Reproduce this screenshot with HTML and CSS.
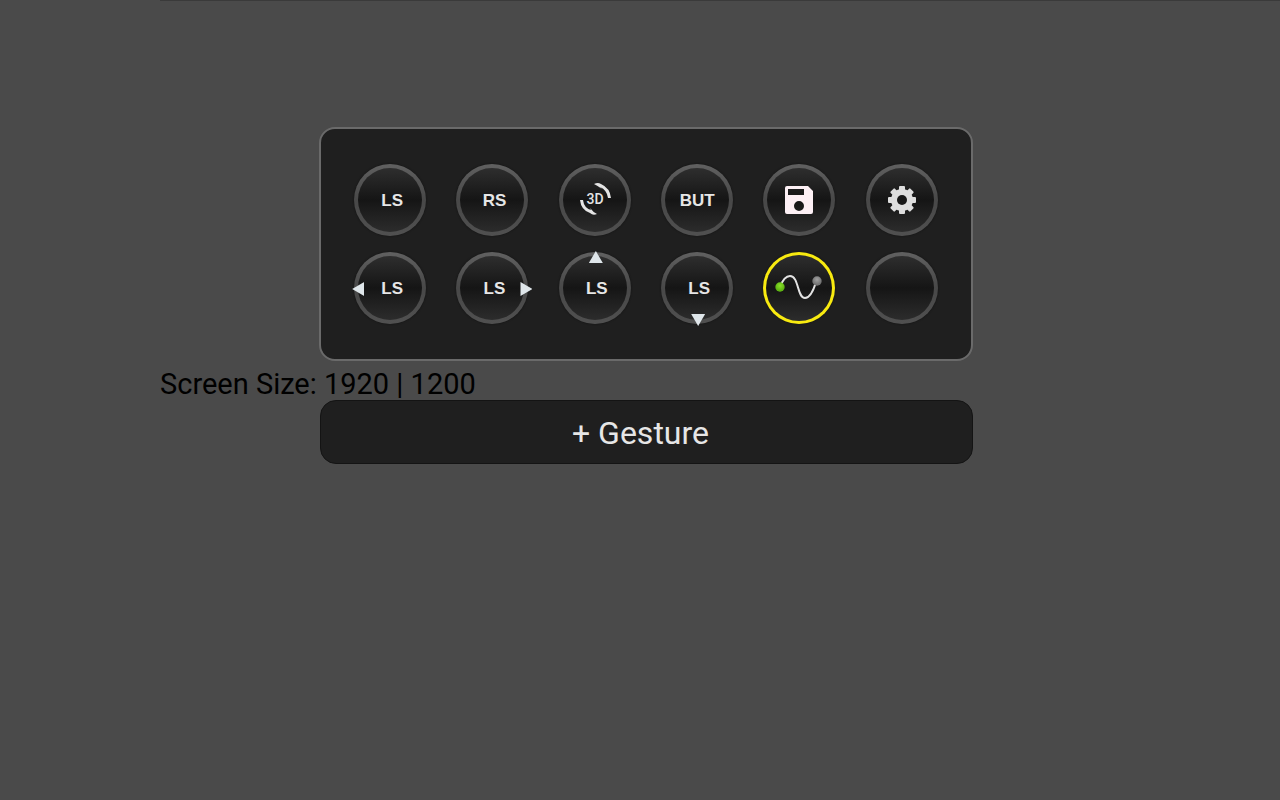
FILE: index.html
```html
<!DOCTYPE html>
<html lang="en">
<head>
    <meta charset="UTF-8">
    <meta name="viewport" content="width=device-width, initial-scale=1.0">
    <title>Gesture Editor</title>
    <link rel="stylesheet" href="styles.css">
</head>
<body>
    <main class="screen">
        <div class="panel">
            <button class="key label stick">LS</button>
            <button class="key label stick">RS</button>
            <button class="key" aria-label="3D rotation">
                <svg class="icon" viewBox="0 0 36 36">
                    <path d="M17 2 Q21 0 24 2 Q33 6 34 16 L31 16 Q30 8 23 5 L25 7 Q21 4 17 2 Z" fill="#e4e4e4"/>
                    <path d="M20 32 Q16 34 13 31 Q4 28 3 18 L6 18 Q7 26 14 28 L13 26 Q16 30 20 32 Z" fill="#e4e4e4"/>
                    <text class="icon-text" x="18" y="22">3D</text>
                </svg>
            </button>
            <button class="key label">BUT</button>
            <button class="key" aria-label="Save">
                <svg class="icon" viewBox="0 0 36 36">
                    <path fill="#fdf0f5" fill-rule="evenodd" d="M6 4 H27 L32 9 V30 Q32 32 30 32 H6 Q4 32 4 30 V6 Q4 4 6 4 Z M7 7 V13 H23 V7 Z M18 19 A5 5 0 1 0 18 29 A5 5 0 1 0 18 19 Z"/>
                </svg>
            </button>
            <button class="key" aria-label="Settings">
                <svg class="icon" viewBox="0 0 36 36">
                    <g fill="#dedede">
                        <rect id="tooth" x="15" y="4" width="6" height="28" rx="1"/>
                        <use href="#tooth" transform="rotate(45 18 18)"/>
                        <use href="#tooth" transform="rotate(90 18 18)"/>
                        <use href="#tooth" transform="rotate(135 18 18)"/>
                        <circle cx="18" cy="18" r="11"/>
                    </g>
                    <circle cx="18" cy="18" r="5" fill="#181818"/>
                </svg>
            </button>

            <button class="key label stick left">LS</button>
            <button class="key label stick right">LS</button>
            <button class="key label stick up">LS</button>
            <button class="key label stick down">LS</button>
            <button class="key selected" aria-label="Gesture path">
                <svg class="curve" viewBox="0 0 48 36">
                    <defs>
                        <radialGradient id="start" cy="35%">
                            <stop offset="0" stop-color="#8be02c"/>
                            <stop offset="1" stop-color="#5fb512"/>
                        </radialGradient>
                        <radialGradient id="end" cy="35%">
                            <stop offset="0" stop-color="#a0a0a0"/>
                            <stop offset="1" stop-color="#747474"/>
                        </radialGradient>
                    </defs>
                    <path d="M5 17 C8 9 11 6 15 6 C24 6 22 28 30 28 C35 28 38 22 41 12" fill="none" stroke="#e2e2e2" stroke-width="2"/>
                    <circle cx="5" cy="17" r="4.700" fill="url(#start)"/>
                    <circle cx="42" cy="11" r="4.700" fill="url(#end)"/>
                </svg>
            </button>
            <button class="key" aria-label="Empty"></button>
        </div>

        <p class="screen-size">Screen Size: 1920 | 1200</p>

        <button class="add-gesture">+ Gesture</button>
    </main>
</body>
</html>
```
FILE: styles.css
```css
:root {
    --background: #4a4a4a;
    --panel: #1f1f1f;
    --line: #6a6a6a;
    --text: #e6e6e6;
}

* {
    margin: 0;
    padding: 0;
    box-sizing: border-box;
}

body {
    font-family: Roboto, sans-serif;
    background: var(--background);
    min-height: 100vh;
}

button {
    font-family: inherit;
    color: var(--text);
    border: none;
    cursor: pointer;
}

.screen {
    margin-left: 12.5%;
    padding-top: 126px;
    border-top: 1px solid #3a3a3a;
}

.panel {
    display: grid;
    grid-template-columns: repeat(6, 1fr);
    justify-items: center;
    row-gap: 16px;
    max-width: 654px;
    margin-left: 159px;
    padding: 35px 18px;
    background: var(--panel);
    border: 2px solid var(--line);
    border-radius: 16px;
}

.key {
    position: relative;
    display: flex;
    align-items: center;
    justify-content: center;
    width: 72px;
    height: 72px;
    border: 4px solid transparent;
    border-radius: 50%;
    background:
        linear-gradient(#2e2e2e, #151515 50%, #1a1a1a 60%, #2c2c2c) padding-box,
        linear-gradient(#606060, #484848 50%, #505050) border-box;
    box-shadow: 0 0 2px #111;
}

.label {
    padding-top: 2px;
    font-family: "Liberation Sans", Arial, sans-serif;
    font-size: 17px;
    font-weight: 700;
}

.stick {
    padding-left: 4px;
}

.selected {
    border-width: 3px;
    background:
        linear-gradient(#2e2e2e, #151515 50%, #1a1a1a 60%, #2c2c2c) padding-box,
        linear-gradient(#f8ea10, #f8ea10) border-box;
}

.icon {
    flex: none;
    width: 36px;
    height: 36px;
}

.icon-text {
    fill: #e4e4e4;
    font-family: Roboto, sans-serif;
    font-size: 14px;
    font-weight: 500;
    text-anchor: middle;
}

.curve {
    flex: none;
    width: 48px;
    height: 36px;
}

/* direction arrows on the rim */
.left::after,
.right::after,
.up::after,
.down::after {
    content: "";
    position: absolute;
    width: 14px;
    height: 12px;
    background: #dfe6ea;
}

.left::after,
.right::after {
    width: 12px;
    height: 14px;
    top: 26px;
}

.left::after {
    left: -6px;
    clip-path: polygon(0 50%, 100% 0, 100% 100%);
}

.right::after {
    right: -8px;
    clip-path: polygon(0 0, 100% 50%, 0 100%);
}

.up::after {
    top: -5px;
    left: 26px;
    clip-path: polygon(50% 0, 100% 100%, 0 100%);
}

.down::after {
    bottom: -6px;
    left: 26px;
    clip-path: polygon(0 0, 100% 0, 50% 100%);
}

.screen-size {
    font-size: 29px;
    line-height: 39px;
    padding-top: 4px;
    height: 39px;
    color: #000;
}

.add-gesture {
    display: block;
    width: 100%;
    max-width: 653px;
    margin-left: 160px;
    padding: 13px 12px 11px 0;
    background: var(--panel);
    border: 1px solid #141414;
    border-radius: 16px;
    font-size: 32px;
    line-height: 38px;
}

@media (max-width: 1000px) {
    .screen {
        margin-left: 0;
    }

    .panel,
    .add-gesture {
        margin-left: auto;
        margin-right: auto;
    }
}
```
